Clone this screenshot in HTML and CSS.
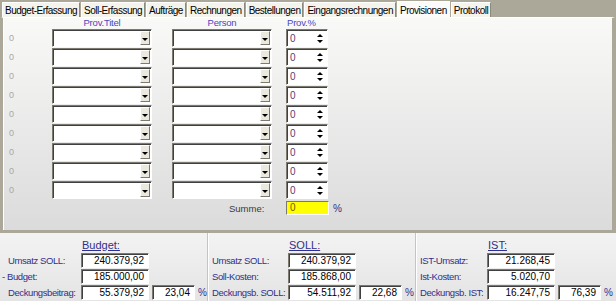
FILE: index.html
```html
<!DOCTYPE html>
<html lang="de">
<head>
    <meta charset="UTF-8">
    <title>Provisionen</title>
    <link rel="stylesheet" href="styles.css">
</head>
<body>
    <div class="window">
        <div class="tabs">
            <div class="tab">Budget-Erfassung</div>
            <div class="tab">Soll-Erfassung</div>
            <div class="tab">Aufträge</div>
            <div class="tab">Rechnungen</div>
            <div class="tab">Bestellungen</div>
            <div class="tab">Eingangsrechnungen</div>
            <div class="tab active">Provisionen</div>
            <div class="tab">Protokoll</div>
        </div>

        <div class="panel">
            <div class="grid">
                <div></div>
                <div class="head">Prov.Titel</div>
                <div></div>
                <div class="head">Person</div>
                <div></div>
                <div class="head">Prov.%</div>
            </div>
            <div class="rows" id="rows"></div>
            <div class="sum-row">
                <span class="sum-label">Summe:</span>
                <span class="sum-box">0</span>
                <span class="unit">%</span>
            </div>
        </div>

        <div class="summary">
            <div class="group budget">
                <div></div>
                <div class="title">Budget:</div>
                <div></div>
                <div></div>
                <div class="label">Umsatz SOLL:</div>
                <div class="field">240.379,92</div>
                <div></div>
                <div></div>
                <div class="label minus">- Budget:</div>
                <div class="field">185.000,00</div>
                <div></div>
                <div></div>
                <div class="label">Deckungsbeitrag:</div>
                <div class="field">55.379,92</div>
                <div class="field pct">23,04</div>
                <div class="unit">%</div>
            </div>
            <div class="group soll">
                <div></div>
                <div class="title">SOLL:</div>
                <div></div>
                <div></div>
                <div class="label">Umsatz SOLL:</div>
                <div class="field">240.379,92</div>
                <div></div>
                <div></div>
                <div class="label">Soll-Kosten:</div>
                <div class="field">185.868,00</div>
                <div></div>
                <div></div>
                <div class="label">Deckungsb. SOLL:</div>
                <div class="field">54.511,92</div>
                <div class="field pct">22,68</div>
                <div class="unit">%</div>
            </div>
            <div class="group ist">
                <div></div>
                <div class="title">IST:</div>
                <div></div>
                <div></div>
                <div class="label">IST-Umsatz:</div>
                <div class="field">21.268,45</div>
                <div></div>
                <div></div>
                <div class="label">Ist-Kosten:</div>
                <div class="field">5.020,70</div>
                <div></div>
                <div></div>
                <div class="label">Deckungsb. IST:</div>
                <div class="field">16.247,75</div>
                <div class="field pct">76,39</div>
                <div class="unit">%</div>
            </div>
        </div>
    </div>

    <script>
        // build the nine commission rows
        const rows = document.getElementById('rows');
        for (let i = 0; i < 9; i++) {
            const row = document.createElement('div');
            row.className = 'grid row';
            row.innerHTML =
                '<div class="num">0</div>' +
                '<div class="combo"><span class="drop"></span></div>' +
                '<div></div>' +
                '<div class="combo"><span class="drop"></span></div>' +
                '<div></div>' +
                '<div class="spin">0<span class="arrows"><i class="up"></i><i class="down"></i></span></div>';
            rows.appendChild(row);
        }
    </script>
</body>
</html>
```

FILE: styles.css
```css
* {
    margin: 0;
    padding: 0;
    box-sizing: border-box;
}

body {
    width: 616px;
    height: 301px;
    overflow: hidden;
    background: #aca899;
    font-family: 'Liberation Sans', Arial, sans-serif;
    font-size: 9px;
    color: #000;
}

.window {
    display: flex;
    flex-direction: column;
    height: 301px;
}

/* tab strip */
.tabs {
    display: flex;
    align-items: flex-end;
    height: 17px;
    padding-left: 2px;
}

.tab {
    height: 15px;
    padding: 1px 2px 0;
    margin-right: 1px;
    font-size: 10px;
    letter-spacing: -0.5px;
    line-height: 13px;
    background: #f4f3ec;
    border: 1px solid #fff;
    border-right-color: #8d8a7c;
    border-bottom: none;
    white-space: nowrap;
}

.tab.active {
    height: 17px;
    padding-top: 2px;
    background: #fbfbf9;
    border-right-color: #fbfbf9;
    margin-bottom: -1px;
    position: relative;
}

/* provision panel */
.panel {
    height: 216px;
    margin: 0 1px 0 1px;
    border: 2px solid #aca899;
    border-right-width: 3px;
    border-bottom-width: 3px;
    border-top: 1px solid #fff;
    box-shadow: inset 1px 0 #fff;
    background: linear-gradient(#f9f9f8, #dbdbdb);
}

.grid {
    display: grid;
    grid-template-columns: 43px 100px 20px 100px 14px 42px;
    padding-left: 6px;
}

.head {
    height: 10px;
    line-height: 9px;
    text-align: center;
    color: #4a46c0;
    font-size: 9.5px;
    letter-spacing: -0.2px;
}

.head:nth-child(6) {
    text-align: left;
    padding-left: 1px;
}

.rows {
    display: flex;
    flex-direction: column;
    gap: 1px;
    margin-top: 1px;
}

.row {
    height: 18px;
    align-items: center;
}

.num {
    color: #a8a8a8;
    font-size: 9px;
}

.combo,
.spin {
    height: 18px;
    background: #fff;
    border: 1px solid;
    border-color: #7c7a70 #fff #fff #7c7a70;
    box-shadow: inset 1px 1px #404040;
    display: flex;
    justify-content: flex-end;
    align-items: center;
    padding-right: 1px;
}

.drop {
    width: 10px;
    height: 14px;
    background: #ebe9de;
    border: 1px solid;
    border-color: #fff #7c7a70 #7c7a70 #fff;
    display: flex;
    justify-content: center;
    align-items: center;
}

.drop::after {
    content: '';
    border: 3px solid transparent;
    border-top: 3px solid #000;
    border-bottom: 0;
    margin-top: 2px;
}

.spin {
    justify-content: space-between;
    padding: 0 4px 0 3px;
    color: #5e3a70;
    font-size: 10px;
}

.arrows {
    display: flex;
    flex-direction: column;
    gap: 3px;
}

.arrows i {
    border: 3px solid transparent;
}

.arrows .up {
    border-bottom: 3px solid #000;
    border-top: 0;
}

.arrows .down {
    border-top: 3px solid #000;
    border-bottom: 0;
}

.sum-row {
    display: flex;
    align-items: center;
    margin-top: 2px;
    padding-left: 226px;
    height: 14px;
}

.sum-label {
    width: 57px;
    color: #3a3a3a;
    font-size: 9.5px;
}

.sum-box {
    width: 43px;
    height: 14px;
    background: #ffff00;
    border: 1px solid;
    border-color: #7c7a70 #fff #fff #7c7a70;
    padding-left: 3px;
    line-height: 12px;
    color: #6a5a00;
    font-size: 10px;
}

.unit {
    padding-left: 4px;
    color: #2f2f8c;
    font-size: 10px;
}

/* totals at the bottom */
.summary {
    flex: 1;
    display: flex;
    background: linear-gradient(#f3f3f3, #e4e4e4);
}

.group {
    display: grid;
    grid-template-columns: 80px 68px 46px auto;
    grid-auto-rows: 15px;
    row-gap: 1px;
    align-items: center;
    padding-top: 4px;
    width: 208px;
    border-right: 1px solid #c4c4c4;
    box-shadow: 1px 0 #fff;
}

.group.budget {
    padding-left: 1px;
}

.group.soll {
    padding-left: 4px;
    grid-template-columns: 76px 68px 46px auto;
}

.group.ist {
    flex: 1;
    border-right: none;
    box-shadow: none;
    padding-left: 4px;
    grid-template-columns: 67px 68px 46px auto;
}

.title {
    color: #2f2f8c;
    text-decoration: underline;
    font-size: 11px;
    padding-left: 1px;
}

.label {
    color: #2f2f8c;
    font-size: 9.5px;
    letter-spacing: -0.4px;
    padding-left: 7px;
    white-space: nowrap;
}

.soll .label,
.ist .label {
    padding-left: 0;
}

.label.minus {
    padding-left: 1px;
}

.field {
    height: 15px;
    background: #fff;
    border: 1px solid;
    border-color: #7c7a70 #fff #fff #7c7a70;
    box-shadow: inset 1px 1px #404040;
    text-align: right;
    padding-right: 4px;
    line-height: 13px;
    font-size: 10px;
}

.field.pct {
    margin-left: 3px;
}

.group .unit {
    padding-left: 3px;
}
```
